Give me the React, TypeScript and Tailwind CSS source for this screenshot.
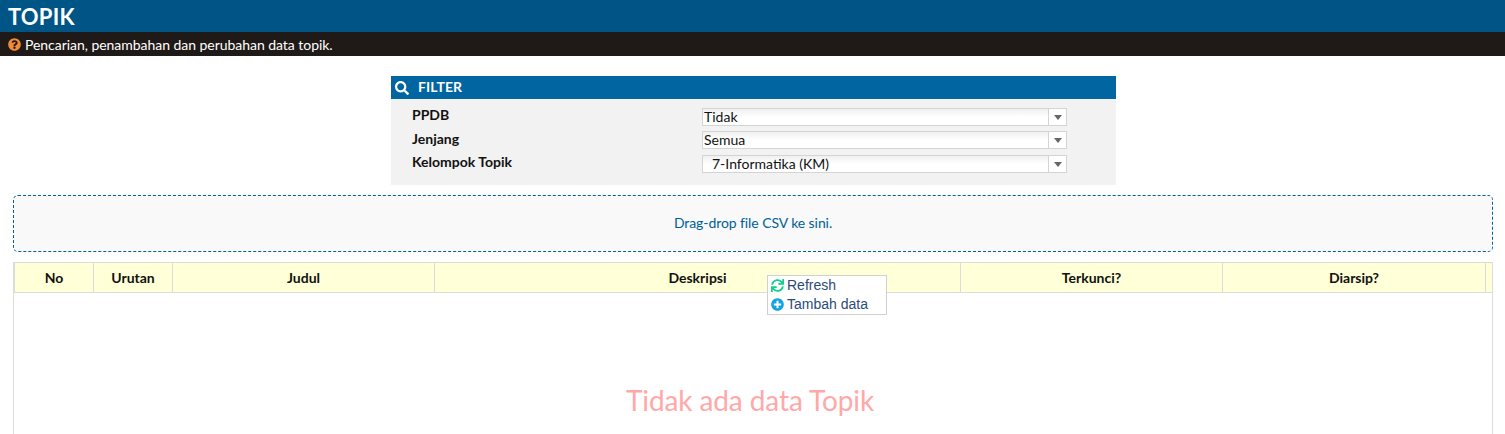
import { FaPlusCircle, FaQuestionCircle, FaSearch, FaSync } from "react-icons/fa";

const filters = [
  { label: "PPDB", value: "Tidak", indent: "pl-[1px]", rowClass: "h-[18px] mt-[9px]", labelClass: "-mt-[1px]" },
  { label: "Jenjang", value: "Semua", indent: "pl-[1px]", rowClass: "h-[18px] mt-[5px]", labelClass: "" },
  { label: "Kelompok Topik", value: "7-Informatika (KM)", indent: "pl-[9px]", rowClass: "h-[18px] mt-[6px]", labelClass: "-mt-[1px]" },
];

const columns = [
  { title: "No", width: "w-[80px] border-l" },
  { title: "Urutan", width: "w-[79px]" },
  { title: "Judul", width: "w-[262px]" },
  { title: "Deskripsi", width: "w-[526px]" },
  { title: "Terkunci?", width: "w-[262px]" },
  { title: "Diarsip?", width: "w-[263px]" },
];

function SelectBox({ value, indent }: { value: string; indent: string }) {
  return (
    <div className="flex h-[18px] w-[365px] border border-[#d4d4d4] bg-white">
      <div className={`flex-1 leading-[15px] text-[14px] text-[#111] bg-gradient-to-b from-[#f0f0f0] via-white to-white ${indent}`}>
        {value}
      </div>
      <div className="flex w-[18px] items-center justify-center border-l border-[#d4d4d4] bg-white">
        <div className="h-0 w-0 border-x-[4px] border-t-[5px] border-x-transparent border-t-[#666]" />
      </div>
    </div>
  );
}

export default function App() {
  return (
    <div className="h-[434px] overflow-hidden bg-white font-['Lato','Noto_Sans',sans-serif]">
      <header className="flex h-[32px] items-center bg-[#005587] pl-[8px] text-[22px] font-bold tracking-[0.2px] text-white">TOPIK</header>
      <div className="flex h-[24px] items-center gap-[4px] bg-[#1f1a17] pl-[8px] text-[14px] tracking-[-0.04px] text-white">
        <FaQuestionCircle className="text-[13px] text-[#f08a33]" />
        <span>Pencarian, penambahan dan perubahan data topik.</span>
      </div>

      <section className="mx-auto mt-[20px] h-[109px] w-[725px] translate-x-[1px] bg-[#f2f2f2]">
        <div className="flex h-[23px] items-center bg-[#0065a0] pl-[4px] text-[14px] font-bold text-white">
          <FaSearch className="text-[14px]" />
          <span className="ml-[9px] -mt-[2px] tracking-[0.1px]">FILTER</span>
        </div>
        {filters.map((f) => (
          <div key={f.label} className={`flex ${f.rowClass}`}>
            <div className={`w-[311px] pl-[21px] text-[14px] leading-[15px] font-bold text-[#111] ${f.labelClass}`}>{f.label}</div>
            <SelectBox value={f.value} indent={f.indent} />
          </div>
        ))}
      </section>

      <div className="mx-[13px] mt-[10px] flex h-[57px] w-[1480px] items-center justify-center rounded-[5px] border border-dashed border-[#00609a] bg-[#f9f9f9] pb-[2px] text-[14px] tracking-[-0.08px] text-[#00609a]">
        Drag-drop file CSV ke sini.
      </div>

      <div className="relative mx-[13px] mt-[10px] h-[200px] w-[1480px] border border-[#dcdcdc]">
        <div className="flex h-[30px] border-b border-[#dcdcdc] bg-[#ffffd8]">
          {columns.map((c) => (
            <div
              key={c.title}
              className={`flex shrink-0 items-center justify-center border-r border-[#dcdcdc] text-[14px] font-bold text-[#111] ${c.width}`}
            >
              {c.title}
            </div>
          ))}
        </div>

        <div className="mt-[91px] -translate-x-[3px] text-center text-[28px] leading-[32px] tracking-[-0.1px] text-[#ffa8a8]">Tidak ada data Topik</div>

        <div className="absolute left-[753px] top-[12px] flex h-[40px] w-[120px] flex-col border border-[#d0d0d0] bg-white pl-[3px] font-['Liberation_Sans',sans-serif] text-[14px] text-[#2c4a78]">
          <div className="flex h-[19px] items-center gap-[3px]">
            <FaSync className="-mt-[1px] text-[13px] text-[#12d08a]" />
            <span>Refresh</span>
          </div>
          <div className="flex h-[19px] items-center gap-[3px]">
            <FaPlusCircle className="-mt-[1px] text-[13px] text-[#12a3e0]" />
            <span>Tambah data</span>
          </div>
        </div>
      </div>
    </div>
  );
}
